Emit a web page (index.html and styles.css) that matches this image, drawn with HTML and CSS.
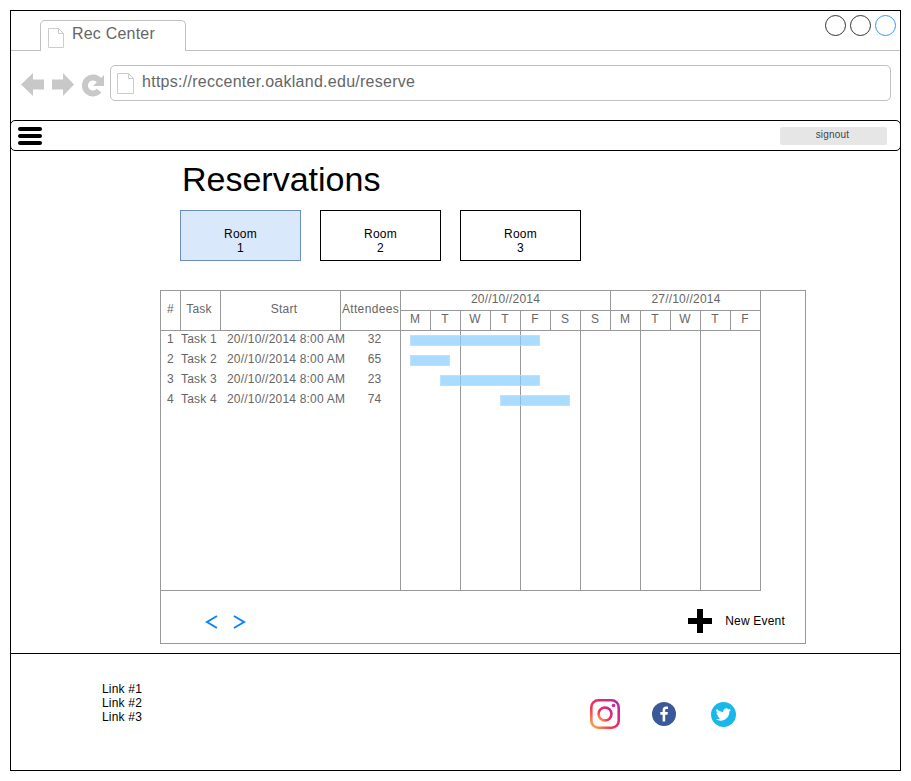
FILE: index.html
```html
<!DOCTYPE html>
<html>
<head>
  <title>Rec Center</title>
  <meta charset="UTF-8">
  <link rel="stylesheet" href="styles.css">
</head>
<body>
<div class="window">
  <div class="tabbar">
    <div class="tab">
      <svg class="page-icon" width="16" height="20" viewBox="0 0 16 20"><path d="M.5.5h10l5 5v14H.5zM10.5.5v5h5" fill="#fff" stroke="#ccc"/></svg>
      <span>Rec Center</span>
    </div>
    <div class="winbtns">
      <span class="winbtn"></span>
      <span class="winbtn"></span>
      <span class="winbtn winbtn-blue"></span>
    </div>
  </div>
  <div class="addressrow">
    <svg class="navicons" width="84" height="25" viewBox="0 0 84 25">
      <path d="M0 12.500 12 1v6.500h11v10H12V24z" fill="#c8c8c8"/>
      <path d="M53 12.500 42 1v6.500H31v10h11V24z" fill="#c8c8c8"/>
      <path d="M78.100 8.400A8 8 0 1 0 78.100 18.600" fill="none" stroke="#c8c8c8" stroke-width="6"/>
      <path d="M83 3v11H72z" fill="#c8c8c8"/>
    </svg>
    <div class="address">
      <svg class="page-icon" width="17" height="21" viewBox="0 0 17 21"><path d="M.5.5h11l5 5v15H.5zM11.500.5v5h5" fill="#fff" stroke="#ccc"/></svg>
      <span>https://reccenter.oakland.edu/reserve</span>
    </div>
  </div>
  <div class="navbar">
    <div class="burger"><i></i><i></i><i></i></div>
    <button class="signout">signout</button>
  </div>
  <div class="main">
    <h1>Reservations</h1>
    <div class="rooms">
      <div class="room room-active">Room<br>1</div>
      <div class="room">Room<br>2</div>
      <div class="room">Room<br>3</div>
    </div>
    <div class="gantt">
      <div class="chart">
        <div class="tasks">
          <div class="task-head">
            <div class="c-num">#</div>
            <div class="c-task">Task</div>
            <div class="c-start">Start</div>
            <div class="c-att">Attendees</div>
          </div>
          <div class="task-row"><div class="c-num">1</div><div class="c-task">Task 1</div><div class="c-start">20//10//2014 8:00 AM</div><div class="c-att">32</div></div>
          <div class="task-row"><div class="c-num">2</div><div class="c-task">Task 2</div><div class="c-start">20//10//2014 8:00 AM</div><div class="c-att">65</div></div>
          <div class="task-row"><div class="c-num">3</div><div class="c-task">Task 3</div><div class="c-start">20//10//2014 8:00 AM</div><div class="c-att">23</div></div>
          <div class="task-row"><div class="c-num">4</div><div class="c-task">Task 4</div><div class="c-start">20//10//2014 8:00 AM</div><div class="c-att">74</div></div>
        </div>
        <div class="timeline">
          <div class="weeks">
            <div class="week week-1">20//10//2014</div>
            <div class="week week-2">27//10//2014</div>
          </div>
          <div class="days">
            <div>M</div><div>T</div><div>W</div><div>T</div><div>F</div><div>S</div>
            <div>S</div><div>M</div><div>T</div><div>W</div><div>T</div><div>F</div>
          </div>
          <div class="bars">
            <div class="bar" style="grid-row:1;grid-column:2 / 15"></div>
            <div class="bar" style="grid-row:2;grid-column:2 / 6"></div>
            <div class="bar" style="grid-row:3;grid-column:5 / 15"></div>
            <div class="bar" style="grid-row:4;grid-column:11 / 18"></div>
          </div>
        </div>
      </div>
      <div class="gantt-foot">
        <div class="pager">
          <svg width="13" height="14" viewBox="0 0 13 14"><path d="M12 1 2 7l10 6" fill="none" stroke="#0a84ff" stroke-width="2"/></svg>
          <svg width="13" height="14" viewBox="0 0 13 14"><path d="m1 1 10 6-10 6" fill="none" stroke="#0a84ff" stroke-width="2"/></svg>
        </div>
        <div class="new-event">
          <svg width="24" height="24" viewBox="0 0 24 24"><path d="M9 0h6v9h9v6h-9v9H9v-9H0V9h9z"/></svg>
          <span>New Event</span>
        </div>
      </div>
    </div>
  </div>
  <div class="footer">
    <div class="links">
      <div>Link #1</div>
      <div>Link #2</div>
      <div>Link #3</div>
    </div>
    <div class="social">
      <svg width="30" height="30" viewBox="0 0 30 30">
        <defs>
          <linearGradient id="ig" x1="0" y1="1" x2="1" y2="0">
            <stop offset="0" stop-color="#fdb34a"/>
            <stop offset=".35" stop-color="#f9344f"/>
            <stop offset=".7" stop-color="#e1247e"/>
            <stop offset="1" stop-color="#a52fb0"/>
          </linearGradient>
        </defs>
        <rect x="1.300" y="1.300" width="27.400" height="27.400" rx="7" fill="none" stroke="url(#ig)" stroke-width="2.600"/>
        <circle cx="15" cy="15" r="6.500" fill="none" stroke="url(#ig)" stroke-width="2.600"/>
        <circle cx="23.500" cy="6.500" r="1.800" fill="#d6249f"/>
      </svg>
      <svg width="24" height="24" viewBox="0 0 24 24">
        <circle cx="12" cy="12" r="12" fill="#3b5998"/>
        <path d="M13.200 19.500v-6.800h2.300l.4-2.700h-2.700V8.400c0-.8.300-1.300 1.400-1.300h1.400V4.700c-.3 0-1.100-.1-2-.1-2 0-3.400 1.200-3.400 3.500V10H8.300v2.700h2.300v6.800z" fill="#fff"/>
      </svg>
      <svg width="25" height="25" viewBox="0 0 25 25">
        <circle cx="12.500" cy="12.500" r="12.500" fill="#1ab7ea"/>
        <path d="M20 7.800c-.6.300-1.200.4-1.800.5.600-.4 1.100-1 1.300-1.700-.6.400-1.300.6-2 .8a3.100 3.100 0 0 0-5.300 2.800A8.800 8.800 0 0 1 5.800 7a3.100 3.100 0 0 0 1 4.100c-.5 0-1-.1-1.400-.4 0 1.500 1.100 2.800 2.500 3.100-.5.100-.9.100-1.400 0 .4 1.200 1.500 2.100 2.900 2.100A6.200 6.200 0 0 1 4.800 17.200a8.800 8.800 0 0 0 13.500-7.800c.7-.4 1.200-1 1.700-1.600z" fill="#fff"/>
      </svg>
    </div>
  </div>
</div>
</body>
</html>
```

FILE: styles.css
```css
*{
  box-sizing: border-box;
}
body{
  margin: 0;
  padding: 10px;
  background-color: white;
  font-family: "Liberation Sans", Arial, sans-serif;
  font-size: 12px;
  letter-spacing: 0.2px;
  color: black;
}
.window{
  width: 891px;
  height: 761px;
  border: solid 1px black;
  display: flex;
  flex-direction: column;
}

/* browser chrome */
.tabbar{
  height: 40px;
  flex: none;
  border-bottom: solid 1px #c0c0c0;
  display: flex;
  justify-content: space-between;
  padding: 9px 4px 0 29px;
}
.tab{
  width: 146px;
  height: 31px;
  border: solid 1px #c0c0c0;
  border-bottom: none;
  border-radius: 5px 5px 0 0;
  background-color: white;
  display: flex;
  align-items: flex-start;
  padding: 7px 0 0 7px;
  gap: 8px;
  font-size: 16px;
  color: #666;
}
.tab span{
  margin-top: -3px;
}
.winbtns{
  display: flex;
  gap: 4px;
  margin-top: -5px;
}
.winbtn{
  width: 21px;
  height: 21px;
  border: solid 1px #333;
  border-radius: 50%;
}
.winbtn-blue{
  border-color: #3399ff;
}
.addressrow{
  height: 70px;
  flex: none;
  display: flex;
  align-items: flex-start;
  padding: 14px 9px 0 10px;
}
.navicons{
  margin: 7px 0 0 0;
  flex: none;
}
.address{
  margin-left: 5px;
  flex: 1;
  height: 36px;
  border: solid 1px #c0c0c0;
  border-radius: 5px;
  display: flex;
  align-items: center;
  padding-left: 6px;
  gap: 8px;
  font-size: 16px;
  letter-spacing: 0.27px;
  color: #666;
}
.address span{
  margin-top: -2px;
}
.navbar{
  height: 31px;
  flex: none;
  margin: -1px -1px 0;
  border: solid 1px black;
  border-radius: 5px;
  display: flex;
  justify-content: space-between;
  align-items: center;
  padding: 0 13px 0 7px;
}
.burger{
  display: flex;
  flex-direction: column;
  gap: 3px;
}
.burger i{
  display: block;
  width: 24px;
  height: 4px;
  border-radius: 2px;
  background-color: black;
}
.signout{
  width: 107px;
  height: 18px;
  border: none;
  border-radius: 2px;
  background-color: #e6e6e6;
  color: #444;
  font-family: inherit;
  font-size: 10px;
  letter-spacing: 0.2px;
  padding: 0 2px 2px 0;
}

/* page */
.main{
  flex: 1;
  padding-left: 149px;
  border-bottom: solid 1px black;
}
h1{
  margin: 8px 0 0 22px;
  font-size: 34px;
  font-weight: normal;
  line-height: 41px;
  letter-spacing: 0;
}
.rooms{
  display: flex;
  gap: 19px;
  margin: 10px 0 0 20px;
}
.room{
  width: 121px;
  height: 51px;
  border: solid 1px black;
  text-align: center;
  line-height: 14px;
  padding-top: 16px;
}
.room-active{
  background-color: #dae8fc;
  border-color: #6c8ebf;
}
.gantt{
  width: 646px;
  height: 354px;
  margin-top: 29px;
  border: solid 1px #999;
  color: #666;
}
.chart{
  display: flex;
  width: 600px;
  height: 300px;
  border-right: solid 1px #999;
  border-bottom: solid 1px #999;
}
.tasks{
  width: 239px;
  flex: none;
}
.task-head, .task-row{
  display: grid;
  grid-template-columns: 19px 40px 120px 60px;
  text-align: center;
}
.task-head{
  height: 40px;
  line-height: 37px;
  border-bottom: solid 1px #999;
}
.task-head div + div{
  border-left: solid 1px #999;
}
.task-head .c-task{
  padding-right: 3px;
}
.task-head .c-start{
  padding-left: 7px;
}
.task-head .c-att{
  letter-spacing: 0.35px;
  white-space: nowrap;
}
.task-row{
  height: 20px;
  line-height: 17px;
  white-space: nowrap;
}
.task-row .c-task{
  text-align: left;
  padding-left: 1px;
}
.task-row .c-start{
  text-align: left;
  padding-left: 7px;
}
.task-row .c-att{
  padding-left: 9px;
}
.timeline{
  width: 361px;
  flex: none;
  border-left: solid 1px #999;
  display: flex;
  flex-direction: column;
}
.weeks{
  display: flex;
  height: 20px;
  line-height: 16px;
  text-align: center;
  border-bottom: solid 1px #999;
}
.week-1{
  width: 210px;
  border-right: solid 1px #999;
}
.week-2{
  flex: 1;
}
.days{
  display: grid;
  grid-template-columns: 29px repeat(11, 30px);
  height: 20px;
  line-height: 16px;
  text-align: center;
  border-bottom: solid 1px #999;
  padding-right: 0;
}
.days div{
  padding-right: 1px;
}
.days div + div{
  border-left: solid 1px #999;
}
.bars{
  flex: 1;
  margin-left: -1px;
  display: grid;
  grid-template-columns: repeat(36, 10px);
  grid-auto-rows: 20px;
  background-image: repeating-linear-gradient(90deg, #999 0, #999 1px, transparent 1px, transparent 60px);
}
.bar{
  height: 11px;
  margin-top: 4px;
  background-color: rgba(134, 205, 255, 0.7);
  border: solid 1px rgba(190, 228, 255, 0.7);
}
.gantt-foot{
  display: flex;
  justify-content: space-between;
  align-items: center;
  padding: 7px 20px 0 44px;
  height: 52px;
}
.pager{
  display: flex;
  gap: 15px;
  margin-top: 2px;
}
.new-event{
  display: flex;
  align-items: center;
  gap: 13px;
  color: black;
}

/* footer */
.footer{
  height: 116px;
  flex: none;
  padding: 28px 0 0 91px;
  display: flex;
  align-items: flex-start;
}
.links{
  line-height: 14px;
  width: 488px;
}
.social{
  display: flex;
  align-items: center;
  margin-top: 17px;
  gap: 32px;
}
.social svg:last-child{
  margin-left: 3px;
}
```
